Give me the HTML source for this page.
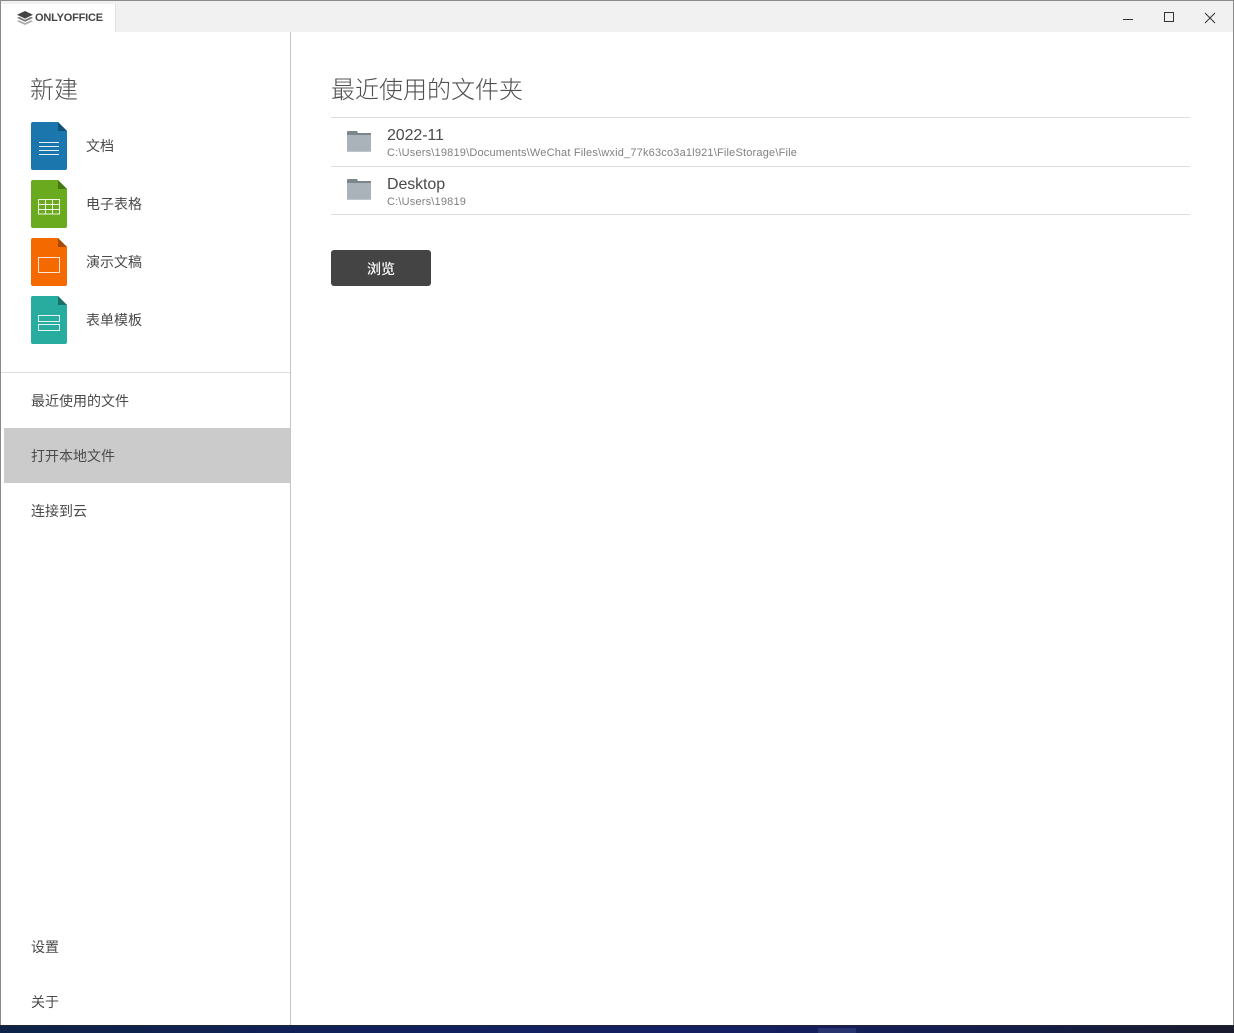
<!DOCTYPE html>
<html lang="zh"><head><meta charset="utf-8"><title>ONLYOFFICE</title>
<style>
html,body{margin:0;padding:0;width:1234px;height:1033px;overflow:hidden;background:#fff}
body{position:relative;font-family:"Liberation Sans","Noto Sans CJK SC",sans-serif;color:#444}
.a{position:absolute;white-space:nowrap}
.m{font-size:14px;line-height:20px;color:#4a4a4a}
.h{font-size:24px;line-height:34px;color:#505050;font-weight:300}
.n{font-size:16px;line-height:20px;color:#4a4a4a;letter-spacing:-.1px}
.p{font-size:11px;line-height:14px;color:#808080;letter-spacing:.19px}
.l{left:331px;width:859px;height:1px;background:#dcdcdc}
</style></head><body>
<div class="a" style="left:0;top:0;width:1234px;height:1px;background:#8a8a8a"></div>
<div class="a" style="left:0;top:0;width:1px;height:1025px;background:#8a8a8a"></div>
<div class="a" style="left:1233px;top:0;width:1px;height:1025px;background:#8a8a8a"></div>
<div class="a" style="left:1px;top:1px;width:1232px;height:31px;background:#f1f1f1"></div>
<div class="a" style="left:1px;top:4px;width:114px;height:28px;background:#fff;border-right:1px solid #e2e2e2"></div>
<svg class="a" style="left:17px;top:11px" width="16" height="15" viewBox="0 0 16 15"><path d="M8 0 16 3.800 8 7.600 0 3.800Z" fill="#444"/><path d="M2 5.900 8 8.700 14 5.900 16 6.900 8 10.700 0 6.900Z" fill="#777"/><path d="M2 9.200 8 12 14 9.200 16 10.200 8 14 0 10.200Z" fill="#aaa"/></svg>
<div class="a" style="left:35px;top:11px;font-size:11px;line-height:14px;font-weight:700;color:#444;letter-spacing:-.2px">ONLYOFFICE</div>
<svg class="a" style="left:1115px;top:6px" width="110" height="22" viewBox="0 0 110 22" fill="none" stroke="#333" stroke-width="1"><path d="M8 13.500H18"/><rect x="49.500" y="6.500" width="9" height="9"/><path d="M90 7 100 17M100 7 90 17"/></svg>
<div class="a" style="left:290px;top:32px;width:1px;height:993px;background:#c4c4c4"></div>
<div class="a h" style="left:30px;top:74px">新建</div>
<svg class="a" style="left:31px;top:122px" width="36" height="48" viewBox="0 0 36 48"><path d="M2 0H27L36 9V46a2 2 0 0 1-2 2H2a2 2 0 0 1-2-2V2a2 2 0 0 1 2-2Z" fill="#1a76ad"/><path d="M27 0 36 9H27Z" fill="#11527a"/><path d="M8 20.500H28M8 24.500H28M8 28.500H28M8 32.500H28" stroke="#e4f0f7"/></svg>
<svg class="a" style="left:31px;top:180px" width="36" height="48" viewBox="0 0 36 48"><path d="M2 0H27L36 9V46a2 2 0 0 1-2 2H2a2 2 0 0 1-2-2V2a2 2 0 0 1 2-2Z" fill="#69aa1f"/><path d="M27 0 36 9H27Z" fill="#467a10"/><path d="M7.500 19.500H28.500V34H7.500ZM7.500 24.500H28.500M7.500 29.500H28.500M14.500 19.500V34M21.500 19.500V34" stroke="#f0f7e4" fill="none"/></svg>
<svg class="a" style="left:31px;top:238px" width="36" height="48" viewBox="0 0 36 48"><path d="M2 0H27L36 9V46a2 2 0 0 1-2 2H2a2 2 0 0 1-2-2V2a2 2 0 0 1 2-2Z" fill="#f56a00"/><path d="M27 0 36 9H27Z" fill="#a54a08"/><path d="M7.500 19.500H28.500V34.500H7.500Z" stroke="#ffe6d0" fill="none"/></svg>
<svg class="a" style="left:31px;top:296px" width="36" height="48" viewBox="0 0 36 48"><path d="M2 0H27L36 9V46a2 2 0 0 1-2 2H2a2 2 0 0 1-2-2V2a2 2 0 0 1 2-2Z" fill="#28aca0"/><path d="M27 0 36 9H27Z" fill="#1a7068"/><path d="M7.500 19.500H28.500V25.500H7.500ZM7.500 28.500H28.500V34.500H7.500Z" stroke="#e4f5f3" fill="none"/></svg>
<div class="a m" style="left:86px;top:136px">文档</div>
<div class="a m" style="left:86px;top:194px">电子表格</div>
<div class="a m" style="left:86px;top:252px">演示文稿</div>
<div class="a m" style="left:86px;top:310px">表单模板</div>
<div class="a" style="left:1px;top:372px;width:289px;height:1px;background:#dcdcdc"></div>
<div class="a" style="left:4px;top:428px;width:286px;height:55px;background:#cbcbcb"></div>
<div class="a m" style="left:31px;top:391px">最近使用的文件</div>
<div class="a m" style="left:31px;top:446px">打开本地文件</div>
<div class="a m" style="left:31px;top:501px">连接到云</div>
<div class="a m" style="left:31px;top:937px">设置</div>
<div class="a m" style="left:31px;top:992px">关于</div>
<div class="a h" style="left:331px;top:74px">最近使用的文件夹</div>
<div class="a l" style="top:117px"></div>
<div class="a l" style="top:166px"></div>
<div class="a l" style="top:214px"></div>
<svg class="a" style="left:347px;top:131px" width="24" height="21" viewBox="0 0 24 21"><path d="M0 1a1 1 0 0 1 1-1H10L11 2H24V4H0Z" fill="#7b858c"/><path d="M0 4H24V20.700H0Z" fill="#aab3ba"/></svg>
<svg class="a" style="left:347px;top:179px" width="24" height="21" viewBox="0 0 24 21"><path d="M0 1a1 1 0 0 1 1-1H10L11 2H24V4H0Z" fill="#7b858c"/><path d="M0 4H24V20.700H0Z" fill="#aab3ba"/></svg>
<div class="a n" style="left:387px;top:126px">2022-11</div>
<div class="a p" style="left:387px;top:146px">C:\Users\19819\Documents\WeChat Files\wxid_77k63co3a1l921\FileStorage\File</div>
<div class="a n" style="left:387px;top:175px">Desktop</div>
<div class="a p" style="left:387px;top:195px">C:\Users\19819</div>
<div class="a" style="left:331px;top:250px;width:100px;height:36px;background:#444;border-radius:3px;color:#fff;font-size:14px;line-height:38px;text-align:center;font-weight:500">浏览</div>
<div class="a" style="left:0;top:1025px;width:1234px;height:8px;background:linear-gradient(90deg,#0e2347 0%,#10205e 35%,#141f63 60%,#151c44 85%,#1a1b2c 100%)"></div>
<div class="a" style="left:0;top:1025px;width:1234px;height:1px;background:#23262e"></div>
<div class="a" style="left:818px;top:1028px;width:38px;height:5px;background:#26336f"></div>
</body></html>
